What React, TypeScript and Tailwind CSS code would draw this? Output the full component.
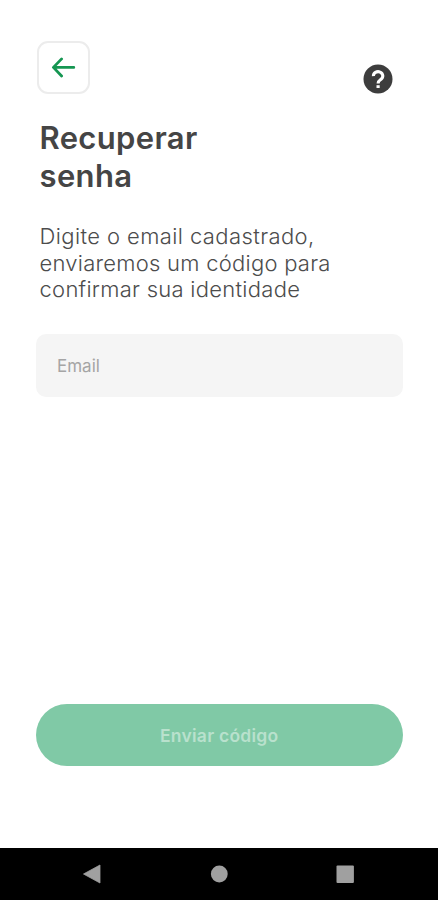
import { useState } from "react";

export default function App() {
  const [email, setEmail] = useState("");

  return (
    <div className="flex h-[900px] w-[438px] flex-col overflow-hidden bg-white font-['Inter',sans-serif]">
      <header className="flex items-start justify-between pt-[41px] pr-[45px] pl-[37px]">
        <button
          aria-label="Voltar"
          className="flex h-[53px] w-[53px] items-center justify-center rounded-[11px] border-2 border-[#ececec] bg-white"
        >
          <svg
            className="h-[22px] w-[26px]"
            viewBox="0 0 26 22"
            fill="none"
            stroke="#159652"
            strokeWidth="2.8"
            strokeLinecap="round"
            strokeLinejoin="round"
          >
            <path d="M22.8 10.4H3M10.6 1.9L2.4 10.4L10.6 19" />
          </svg>
        </button>
        <button aria-label="Ajuda" className="mt-[23px] h-[30px] w-[30px]">
          <svg viewBox="0 0 30 30" fill="none">
            <circle cx="15" cy="15" r="14.5" fill="#3d3d3d" />
            <path
              d="M10.4 12.2a4.7 4.3 0 1 1 7.5 3.2c-1.8 1.3-2.8 1.9-2.8 4.2"
              stroke="#fff"
              strokeWidth="3.1"
            />
            <path d="M13.5 21.2h3.2v2.8h-3.2z" fill="#fff" />
          </svg>
        </button>
      </header>

      <main className="flex flex-1 flex-col pr-[35px] pl-[35.5px]">
        <h1 className="mt-[25px] ml-1 text-[31px] leading-[38px] font-semibold tracking-[0.35px] text-[#454545]">
          Recuperar
          <br />
          senha
        </h1>
        <p className="mt-7 ml-1 text-[22px] leading-[26.5px] font-light text-[#4c4c4c]">
          <span className="block tracking-[0.4px]">Digite o email cadastrado,</span>
          <span className="block tracking-[0.25px]">enviaremos um código para</span>
          <span className="block tracking-[0.27px]">confirmar sua identidade</span>
        </p>
        <input
          type="email"
          placeholder="Email"
          value={email}
          onChange={(e) => setEmail(e.target.value)}
          className="mt-[31px] h-[63px] w-full rounded-[10px] bg-[#f5f5f5] px-[21.5px] pt-0.5 text-[17px] text-[#454545] outline-none placeholder:text-[#a5a5a5]"
        />
        <button
          disabled={!email}
          className="mt-auto mb-[82px] h-[62px] w-full rounded-full bg-[#159652] pt-[3px] text-[17.5px] font-semibold tracking-[0.25px] text-white disabled:bg-[#80c9a6] disabled:text-[#b9e1cd]"
        >
          Enviar código
        </button>
      </main>

      {/* Android navigation bar */}
      <nav className="flex h-[52px] items-center justify-between bg-black pr-[83px] pl-[82px]">
        <svg className="h-5 w-5" viewBox="0 0 20 20" fill="#a0a0a0">
          <path d="M1.5 10L18 1V19Z" stroke="#a0a0a0" strokeWidth="0.8" strokeLinejoin="round" />
        </svg>
        <svg className="h-5 w-5" viewBox="0 0 20 20" fill="#a0a0a0">
          <circle cx="10.3" cy="10" r="8.4" />
        </svg>
        <svg className="h-5 w-5" viewBox="0 0 20 20" fill="#a0a0a0">
          <rect x="1.5" y="1.5" width="17.4" height="17.4" rx="1" />
        </svg>
      </nav>
    </div>
  );
}
